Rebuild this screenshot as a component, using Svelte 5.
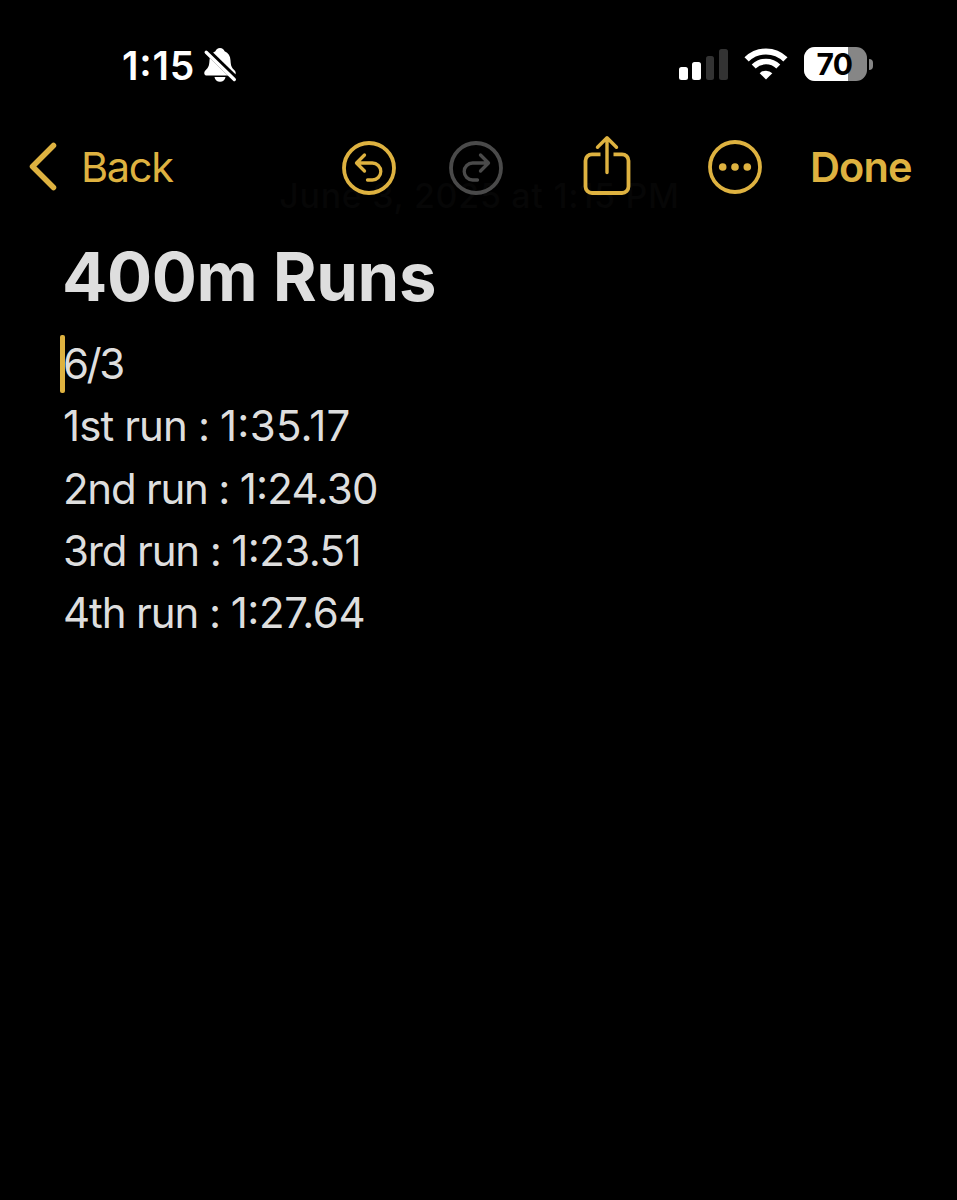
<script lang="ts">
  const title = '400m Runs';
  const date = 'June 3, 2025 at 1:15 PM';
  const day = '6/3';
  const battery = 70;

  // tracking: letter spacing in px for the label and for the time
  const runs = [
    { label: '1st run', time: ['1', '35.17'], tracking: [-0.9, 0.25] },
    { label: '2nd run', time: ['1', '24.30'], tracking: [-1.25, -0.75] },
    { label: '3rd run', time: ['1', '23.51'], tracking: [-1.15, -0.6] },
    { label: '4th run', time: ['1', '27.64'], tracking: [-1.1, -0.45] },
  ];

  const bars = [
    { height: 13, on: true },
    { height: 18, on: true },
    { height: 24, on: false },
    { height: 31, on: false },
  ];
</script>

<div class="screen">
  <header class="status">
    <span class="clock">1<span class="colon">:</span>15</span>
    <svg class="bell" width="34" height="36" viewBox="0 0 34 36">
      <g fill="#fff">
        <path d="M17 1c-2.300 0-4 1.300-4.600 3.200C8.600 5.800 6.700 9 6.500 13.300c-.3 6-1.300 7.500-3.900 9.900-2.200 2.100-1.500 5.300 1.200 5.300h26.400c2.700 0 3.400-3.200 1.200-5.300-2.600-2.400-3.600-3.900-3.900-9.900-.2-4.300-2.100-7.500-5.900-9.100C21 2.300 19.300 1 17 1z" />
        <path d="M11.500 30h11c-.4 3-2.600 4.800-5.500 4.800S11.900 33 11.500 30z" />
      </g>
      <path d="M2 2L34 33" stroke="#000" stroke-width="6.200" />
      <path d="M3.200 5.200L31.300 32.500" stroke="#fff" stroke-width="3.300" stroke-linecap="round" />
    </svg>
    <div class="signal">
      {#each bars as bar}
        <span class="bar" class:on={bar.on} style:height="{bar.height}px"></span>
      {/each}
    </div>
    <svg class="wifi" width="44" height="32" viewBox="0 0 44 32" fill="none" stroke="#fff">
      <path d="M2.600 11.400a27.500 27.500 0 0 1 38.800 0" stroke-width="6" />
      <path d="M9.700 18.600a17.400 17.400 0 0 1 24.600 0" stroke-width="5.600" />
      <path d="M22 31.500l-6.300-6.300a9 9 0 0 1 12.600 0z" fill="#fff" stroke="none" />
    </svg>
    <div class="battery">
      <div class="level" style:width="{battery}%"></div>
      <span class="percent">{battery}</span>
    </div>
    <span class="terminal"></span>
  </header>

  <nav class="toolbar">
    <button class="back">
      <svg width="30" height="50" viewBox="0 0 30 50">
        <path d="M25.500 3.500L4.500 24.500l21 21" stroke-width="5.500" />
      </svg>
      <span>Back</span>
    </button>
    <button class="undo" aria-label="Undo">
      <svg width="54" height="54" viewBox="0 0 54 54">
        <circle cx="27" cy="27" r="25" />
        <path d="M22.500 14L14.500 22l8 8M15 22h15.300a8.500 8.500 0 0 1 0 17H25.500" stroke-width="3.300" />
      </svg>
    </button>
    <button class="redo" aria-label="Redo" disabled>
      <svg width="54" height="54" viewBox="0 0 54 54">
        <circle cx="27" cy="27" r="25" />
        <path d="M31.500 14l8 8-8 8M39 22H23.700a8.500 8.500 0 0 0 0 17h4.800" stroke-width="3.300" />
      </svg>
    </button>
    <button class="share" aria-label="Share">
      <svg width="48" height="60" viewBox="0 0 48 60">
        <path d="M17.500 19.300H9a6.500 6.500 0 0 0-6.500 6.500v25.700A6.500 6.500 0 0 0 9 58h30a6.500 6.500 0 0 0 6.500-6.500V25.800a6.500 6.500 0 0 0-6.500-6.500h-8.500" stroke-linecap="butt" />
        <path d="M24 3v34.500M14.500 12.200L24 2.700l9.500 9.500" stroke-width="3.400" />
      </svg>
    </button>
    <button class="more" aria-label="More">
      <svg width="54" height="54" viewBox="0 0 54 54">
        <circle cx="27" cy="27" r="25" />
        <g fill="currentColor" stroke="none">
          <circle cx="14.700" cy="27" r="3.800" />
          <circle cx="27" cy="27" r="3.800" />
          <circle cx="39.300" cy="27" r="3.800" />
        </g>
      </svg>
    </button>
    <button class="done">Done</button>
    <span class="date">{date}</span>
  </nav>

  <main class="note">
    <h1>{title}</h1>
    <p class="line current"><span class="caret"></span>{day}</p>
    {#each runs as { label, time, tracking }}
      <p class="line">
        <span style:letter-spacing="{tracking[0]}px">{`${label} : `}</span><span style:letter-spacing="{tracking[1]}px">{time[0]}<span class="colon">:</span>{time[1]}</span>
      </p>
    {/each}
  </main>
</div>

<style>
  :global(body) {
    background: #000;
  }

  .screen {
    width: 957px;
    height: 1200px;
    box-sizing: border-box;
    overflow: hidden;
    background: #000;
    color: #dedede;
    font-family: Inter, 'Liberation Sans', sans-serif;
    font-feature-settings: 'calt' 0;
  }

  /* Colon between digits sits at the middle of the figures */
  .colon {
    position: relative;
    top: -0.1em;
  }

  .status {
    display: flex;
    align-items: center;
    height: 130px;
    padding-left: 122px;
    color: #fff;
  }

  .clock {
    width: 81px;
    margin-top: 1px;
    font-size: 39px;
    font-weight: 600;
    line-height: 48px;
    letter-spacing: 0.800px;
    white-space: nowrap;
  }

  .signal {
    display: flex;
    align-items: flex-end;
    gap: 4.500px;
    width: 49px;
    height: 31px;
    margin: -1px 0 0 442px;
  }

  .bar {
    width: 8.800px;
    flex-shrink: 0;
    border-radius: 2.500px;
    background: #333;
  }

  .bar.on {
    background: #fff;
  }

  .wifi {
    margin: -2px 0 0 16px;
  }

  .battery {
    position: relative;
    width: 63px;
    height: 34px;
    margin: -2px 0 0 16px;
    overflow: hidden;
    border-radius: 11px;
    background: #868686;
  }

  .level {
    height: 100%;
    background: #fff;
  }

  .percent {
    position: absolute;
    inset: 0 2px 0 0;
    color: #000;
    font-size: 30px;
    font-weight: 700;
    line-height: 34px;
    letter-spacing: -0.500px;
    text-align: center;
  }

  .terminal {
    width: 4px;
    height: 11px;
    margin: -2px 0 0 2px;
    border-radius: 0 5px 5px 0;
    background: #868686;
  }

  .toolbar {
    position: relative;
    display: flex;
    align-items: center;
    height: 74px;
    padding-left: 28px;
    color: #deb240;
  }

  button {
    z-index: 1;
    display: flex;
    align-items: center;
    flex-shrink: 0;
    padding: 0;
    border: none;
    background: none;
    color: inherit;
    font: inherit;
    font-size: 41.500px;
    line-height: 50px;
    letter-spacing: -1.300px;
    cursor: pointer;
  }

  button svg {
    fill: none;
    stroke: currentColor;
    stroke-width: 3.800;
    stroke-linecap: round;
    stroke-linejoin: round;
  }

  .back {
    gap: 23px;
    width: 314px;
  }

  .redo {
    margin-left: 53px;
    color: #4a4a4a;
  }

  .undo,
  .redo {
    margin-top: 2px;
  }

  .share {
    margin: -4px 0 0 80px;
  }

  .more {
    margin-left: 77px;
  }

  .done {
    margin-left: 48px;
    font-weight: 600;
    letter-spacing: -0.900px;
  }

  /* Creation date, scrolled up under the toolbar */
  .date {
    position: absolute;
    top: 45px;
    left: 1px;
    width: 100%;
    color: #060606;
    font-size: 34px;
    font-weight: 500;
    line-height: 42px;
    letter-spacing: 0.700px;
    text-align: center;
  }

  .note {
    padding: 32px 63px;
  }

  h1 {
    margin: 0 0 0 -1px;
    font-size: 67px;
    font-weight: 700;
    line-height: 82px;
    letter-spacing: -0.400px;
  }

  .line {
    margin: 0;
    font-size: 42px;
    line-height: 62.300px;
    white-space: pre;
  }

  .current {
    position: relative;
    margin-top: 15px;
    letter-spacing: -2.500px;
  }

  .caret {
    position: absolute;
    top: 2px;
    left: -3px;
    width: 4.500px;
    height: 58px;
    border-radius: 2px;
    background: #deb240;
  }
</style>
